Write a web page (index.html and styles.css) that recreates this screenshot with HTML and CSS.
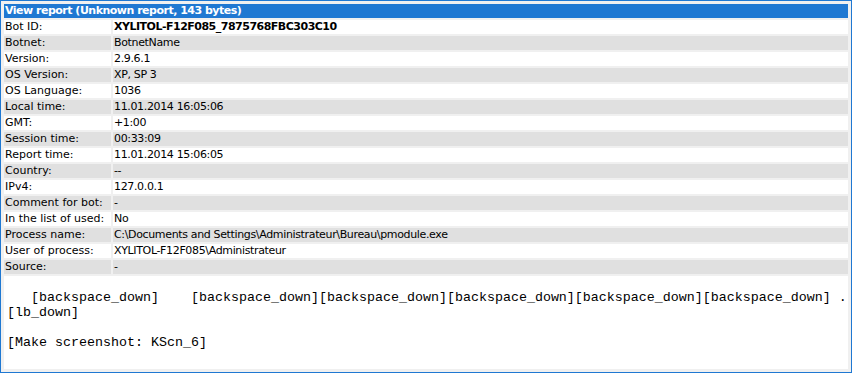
FILE: index.html
```html
<!DOCTYPE html>
<html>
<head>
    <meta charset="utf-8">
    <title>View report</title>
    <link rel="stylesheet" href="styles.css">
</head>
<body>
<div class="frame">
<table class="report">
    <colgroup>
        <col class="name-col">
        <col>
    </colgroup>
    <tr><td class="title" colspan="2">View report (Unknown report, 143 bytes)</td></tr>
    <tr class="odd"><td>Bot ID:</td><td class="value bold">XYLITOL-F12F085_7875768FBC303C10</td></tr>
    <tr class="even"><td>Botnet:</td><td class="value">BotnetName</td></tr>
    <tr class="odd"><td>Version:</td><td class="value">2.9.6.1</td></tr>
    <tr class="even"><td>OS Version:</td><td class="value">XP, SP 3</td></tr>
    <tr class="odd"><td>OS Language:</td><td class="value">1036</td></tr>
    <tr class="even"><td>Local time:</td><td class="value">11.01.2014 16:05:06</td></tr>
    <tr class="odd"><td>GMT:</td><td class="value">+1:00</td></tr>
    <tr class="even"><td>Session time:</td><td class="value">00:33:09</td></tr>
    <tr class="odd"><td>Report time:</td><td class="value">11.01.2014 15:06:05</td></tr>
    <tr class="even"><td>Country:</td><td class="value">--</td></tr>
    <tr class="odd"><td>IPv4:</td><td class="value">127.0.0.1</td></tr>
    <tr class="even"><td>Comment for bot:</td><td class="value">-</td></tr>
    <tr class="odd"><td>In the list of used:</td><td class="value">No</td></tr>
    <tr class="even"><td>Process name:</td><td class="value">C:\Documents and Settings\Administrateur\Bureau\pmodule.exe</td></tr>
    <tr class="odd"><td>User of process:</td><td class="value">XYLITOL-F12F085\Administrateur</td></tr>
    <tr class="even"><td>Source:</td><td class="value">-</td></tr>
    <tr class="odd"><td class="data" colspan="2"><pre>   [backspace_down]    [backspace_down][backspace_down][backspace_down][backspace_down][backspace_down] .
[lb_down]

[Make screenshot: KScn_6]</pre></td></tr>
</table>
</div>
</body>
</html>
```
FILE: styles.css
```css
body {
    margin: 0;
    font-family: "DejaVu Sans", Verdana, sans-serif;
    font-size: 11px;
}
.frame {
    width: 850px;
    height: 371px;
    border: 1px solid #1f78d2;
    background: #f0f0f0;
}
table.report {
    border-collapse: separate;
    border-spacing: 2px;
    margin: 1px;
    width: 848px;
    table-layout: fixed;
}
table.report col.name-col {
    width: 107px;
}
table.report td {
    padding: 0 2px 0 1px;
    height: 14px;
    line-height: 14px;
    white-space: nowrap;
    overflow: hidden;
    color: #000000;
}
table.report td.title {
    background: #1f78d2;
    color: #ffffff;
    font-weight: bold;
    letter-spacing: -0.5px;
}
table.report td.value {
    letter-spacing: -0.35px;
}
table.report td.bold {
    font-weight: bold;
    letter-spacing: -0.5px;
}
table.report tr.odd td {
    background: #ffffff;
}
table.report tr.even td {
    background: #e0e0e0;
}
table.report td.data {
    height: 93px;
    padding: 0;
    vertical-align: top;
}
table.report td.data pre {
    margin: 0;
    padding: 14px 0 0 3px;
    font-family: "Liberation Mono", "Courier New", monospace;
    font-size: 13.33px;
    line-height: 15px;
    letter-spacing: 0;
}
```
